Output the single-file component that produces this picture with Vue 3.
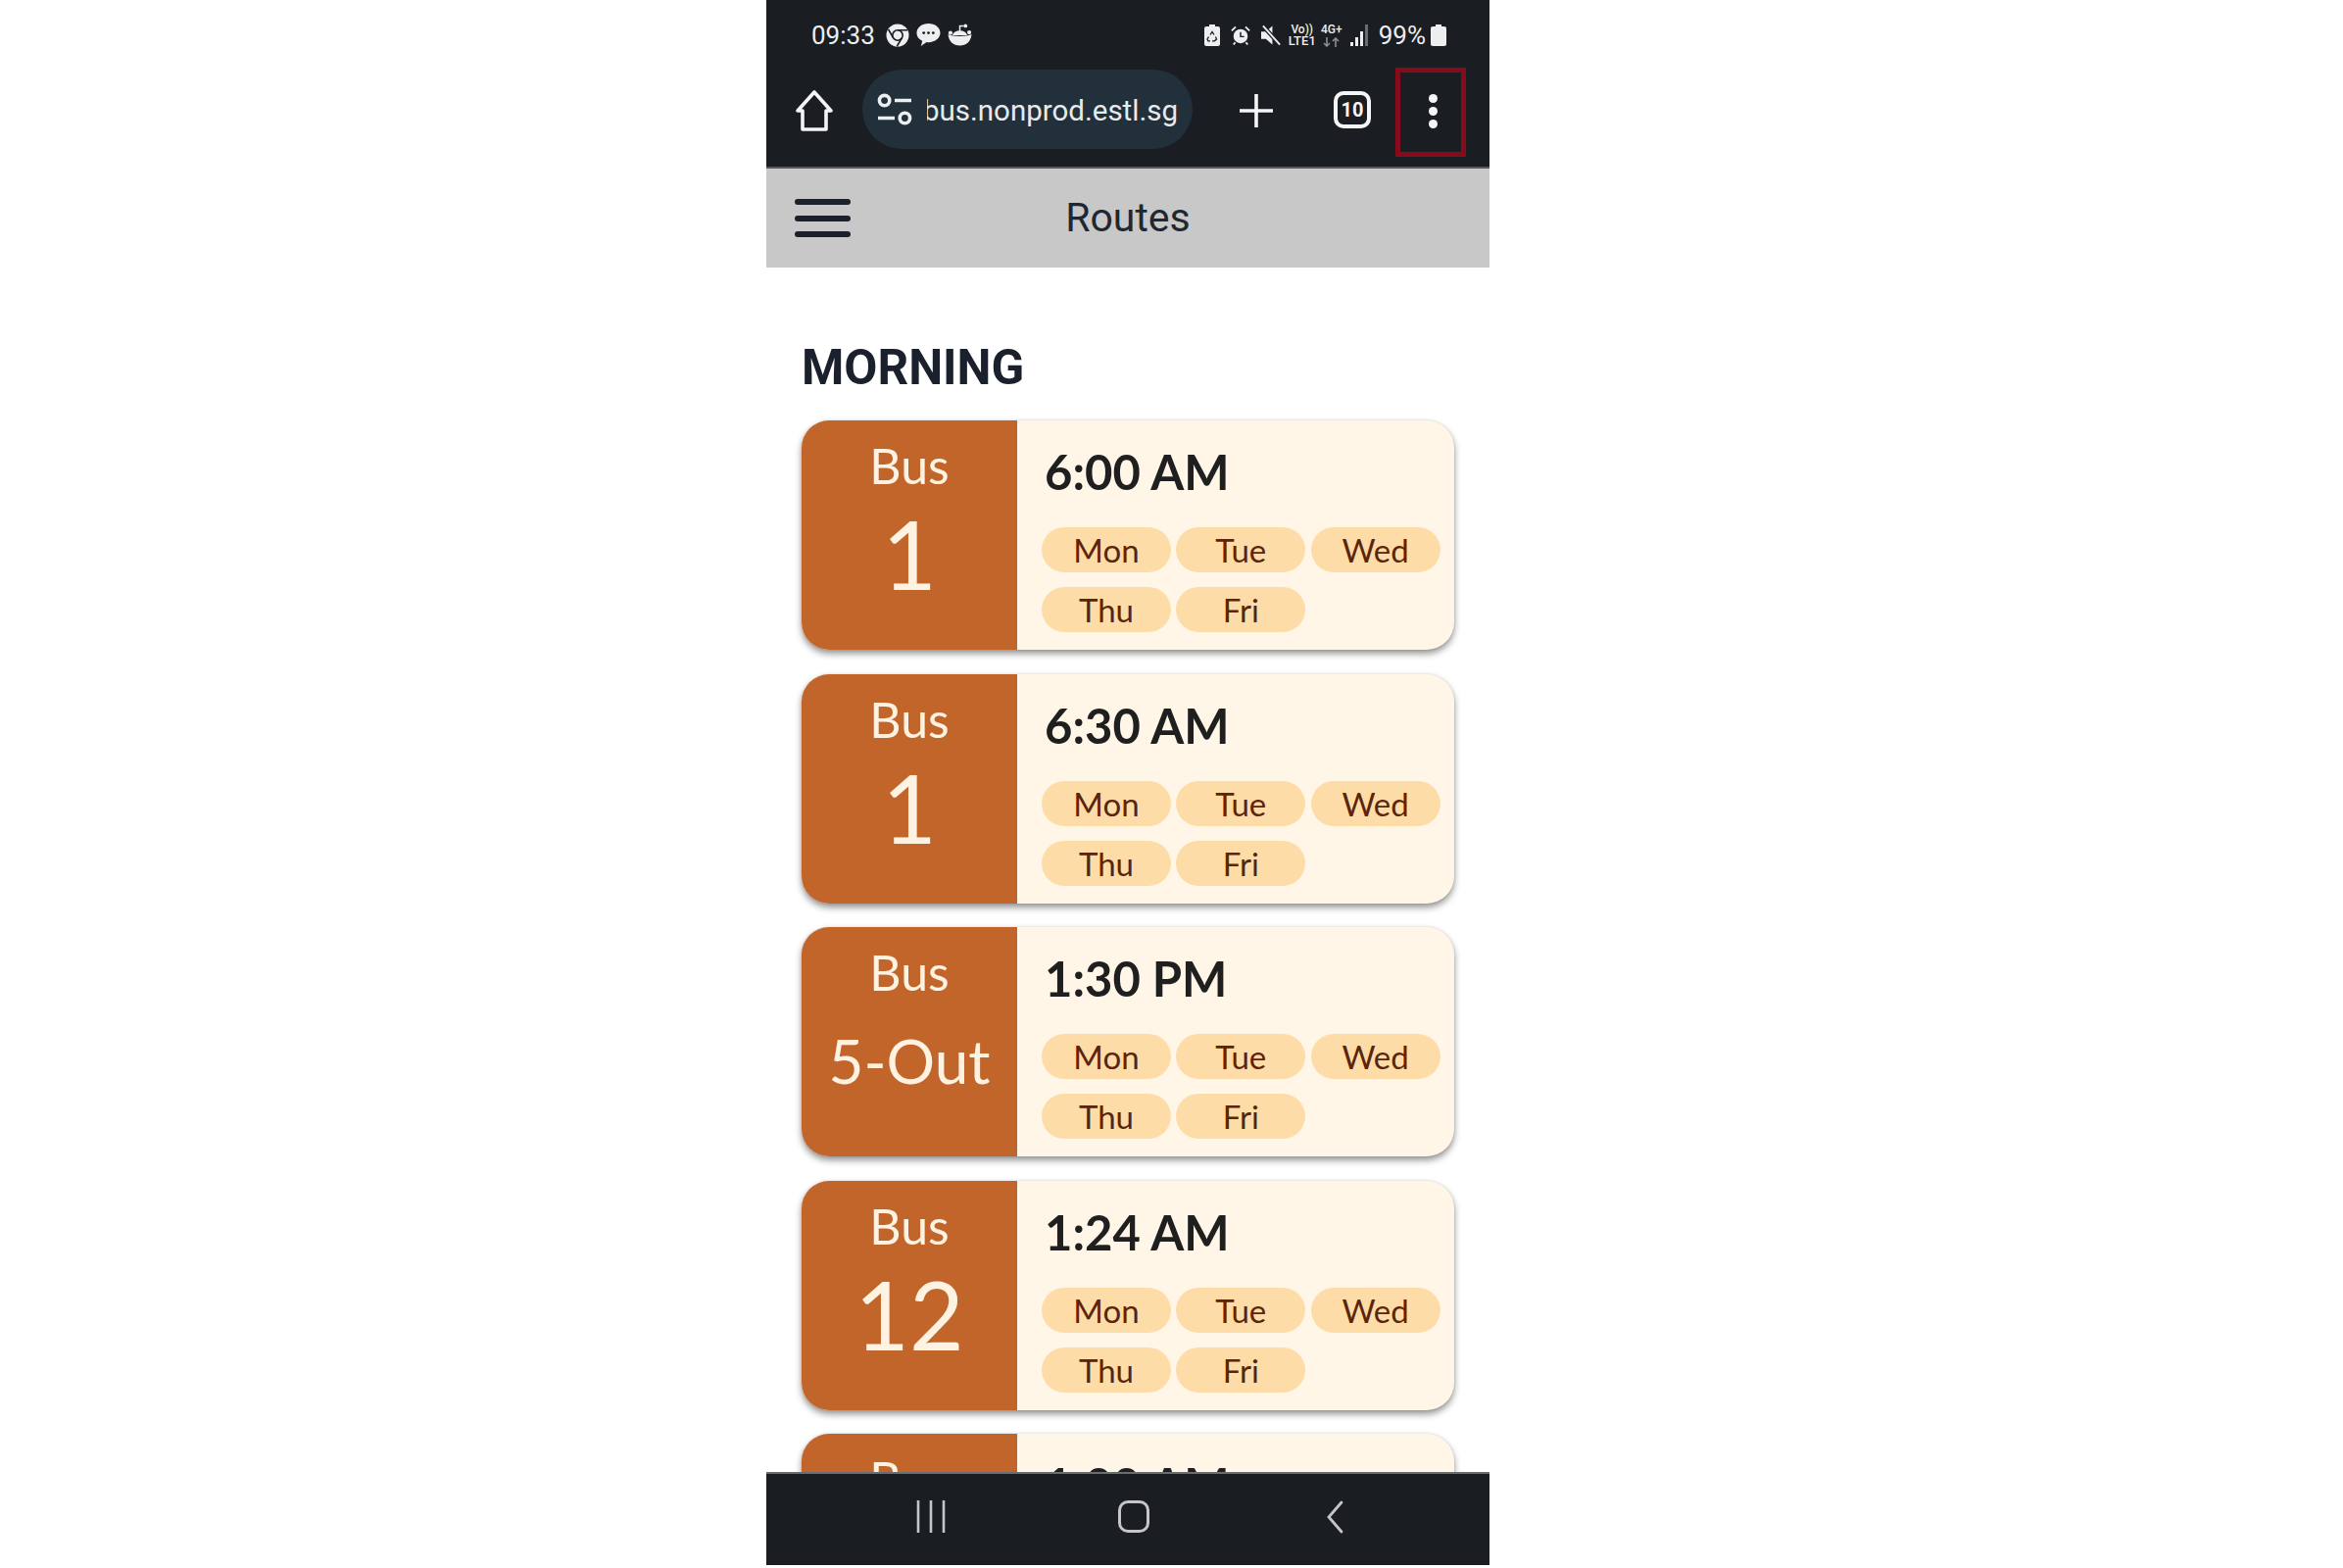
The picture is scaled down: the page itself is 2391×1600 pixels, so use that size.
<script setup>
const days = ['Mon', 'Tue', 'Wed', 'Thu', 'Fri']

const routes = [
  { bus: '1', time: '6:00 AM' },
  { bus: '1', time: '6:30 AM' },
  { bus: '5-Out', time: '1:30 PM' },
  { bus: '12', time: '1:24 AM' },
  { bus: '2', time: '1:00 AM' },
]
</script>

<template>
  <div class="stage">
    <div class="phone">
      <div class="chrome">
        <div class="status">
          <span class="clock">09:33</span>
          <!-- chrome -->
          <svg class="ico chrome-ico" viewBox="0 0 24 24">
            <circle cx="12" cy="12" r="11.5" fill="#eceef0" />
            <circle cx="12" cy="12" r="5.2" fill="#eceef0" stroke="#1a1d21" stroke-width="1.6" />
            <path d="M12 6.8H22M7.5 14.6L2.6 6M16.5 14.6L11.4 23" stroke="#1a1d21" stroke-width="1.6" fill="none" />
          </svg>
          <!-- messages -->
          <svg class="ico msg-ico" viewBox="0 0 26 26">
            <path d="M13 1C6 1 .5 5.4.5 11c0 4 2.500 7 6 8.500L5 25l6-4.200c1 .2 1.500.2 2 .2 7 0 12.500-4.400 12.500-10S20 1 13 1z" fill="#eceef0" />
            <circle cx="8" cy="11" r="1.500" fill="#1a1d21" />
            <circle cx="13" cy="11" r="1.500" fill="#1a1d21" />
            <circle cx="18" cy="11" r="1.500" fill="#1a1d21" />
          </svg>
          <!-- reddit-ish -->
          <svg class="ico pot-ico" viewBox="0 0 26 24">
            <path d="M.5 11.500C4 13 8 13.500 13 13.500S22 13 25.500 11.500C25 19 20 23.500 13 23.500S1 19 .5 11.500z" fill="#eceef0" />
            <path d="M13 10V2.500h4" stroke="#eceef0" stroke-width="1.600" fill="none" />
            <circle cx="19" cy="2.500" r="2" fill="#eceef0" />
            <circle cx="23" cy="9.500" r="2.200" fill="#eceef0" />
            <circle cx="3" cy="10" r="2.200" fill="#eceef0" />
            <path d="M5 12.500C6 9 9 7.500 13 7.500S20 9 21 12.500z" fill="#eceef0" />
          </svg>
          <div class="spacer"></div>
          <!-- power saving -->
          <svg class="ico saver-ico" viewBox="0 0 16 22">
            <path d="M5 0h6v2h3a2 2 0 0 1 2 2v16a2 2 0 0 1-2 2H2a2 2 0 0 1-2-2V4a2 2 0 0 1 2-2h3z" fill="#eceef0" />
            <path d="M6 10.500L8 7.500l2 3M11.500 12.500l1 2.500-2 1.800H8M6 16.800H4l-1-1.800 1.500-2.500" stroke="#1a1d21" stroke-width="1.300" fill="none" />
          </svg>
          <!-- alarm -->
          <svg class="ico alarm-ico" viewBox="0 0 22 22">
            <circle cx="11" cy="12" r="8" fill="#eceef0" />
            <path d="M11 7.500V12.500H15" stroke="#1a1d21" stroke-width="1.600" fill="none" />
            <path d="M1 6l4.500-4.500M21 6l-4.500-4.500M5 19l-2 2.500M17 19l2 2.500" stroke="#eceef0" stroke-width="2" />
          </svg>
          <!-- mute -->
          <svg class="ico mute-ico" viewBox="0 0 22 22">
            <path d="M0 7h5l7-6v20l-7-6H0z" fill="#eceef0" />
            <path d="M2 1l18 20" stroke="#1a1d21" stroke-width="4.500" />
            <path d="M2 1l18 20" stroke="#eceef0" stroke-width="2" />
          </svg>
          <div class="net volte"><span>Vo))</span><span>LTE1</span></div>
          <div class="net four-g">
            <span>4G+</span>
            <svg viewBox="0 0 22 10"><path d="M6 0v9M3 6l3 3 3-3M15 10V1M12 4l3-3 3 3" stroke="#8b8e91" stroke-width="1.600" fill="none" /></svg>
          </div>
          <!-- signal -->
          <svg class="ico signal-ico" viewBox="0 0 19 22">
            <rect x="0" y="18" width="3" height="4" fill="#eceef0" />
            <rect x="5" y="13" width="3" height="9" fill="#eceef0" />
            <rect x="10" y="7" width="3" height="15" fill="#eceef0" />
            <rect x="15" y="0" width="3" height="22" fill="#6a6d70" />
          </svg>
          <span class="pct">99%</span>
          <!-- battery -->
          <svg class="ico batt-ico" viewBox="0 0 16 22">
            <path d="M5 0h6v2h3a2 2 0 0 1 2 2v16a2 2 0 0 1-2 2H2a2 2 0 0 1-2-2V4a2 2 0 0 1 2-2h3z" fill="#eceef0" />
          </svg>
        </div>

        <div class="toolbar">
          <svg class="home-ico" viewBox="0 0 40 44">
            <path d="M20 3L3 22h5v19h24V22h5z" fill="none" stroke="#f4f5f6" stroke-width="3.600" stroke-linejoin="round" />
          </svg>
          <div class="pill">
            <svg class="tune-ico" viewBox="0 0 38 36">
              <circle cx="8" cy="8" r="5.500" fill="none" stroke="#eceef0" stroke-width="3.800" />
              <path d="M19 8H37M1 27H19" stroke="#eceef0" stroke-width="3.800" />
              <circle cx="30" cy="27" r="5.500" fill="none" stroke="#eceef0" stroke-width="3.800" />
            </svg>
            <div class="url"><span>bus.nonprod.estl.sg</span></div>
          </div>
          <svg class="plus-ico" viewBox="0 0 36 36">
            <path d="M18 1V35M1 18H35" stroke="#f4f5f6" stroke-width="3.600" />
          </svg>
          <div class="tabs">10</div>
          <div class="dots"><i></i><i></i><i></i></div>
          <div class="highlight"></div>
        </div>
      </div>

      <header class="app-bar">
        <div class="burger"><i></i><i></i><i></i></div>
        <div class="title">Routes</div>
      </header>

      <main class="content">
        <h2>MORNING</h2>
        <div v-for="(r, i) in routes" :key="i" class="card">
          <div class="bus">
            <div class="bus-label">Bus</div>
            <div class="bus-num" :class="{ long: r.bus.length > 2 }">{{ r.bus }}</div>
          </div>
          <div class="info">
            <div class="time">{{ r.time }}</div>
            <div class="days">
              <span v-for="d in days" :key="d" class="day">{{ d }}</span>
            </div>
          </div>
        </div>
      </main>

      <nav class="nav-bar">
        <svg class="recents" viewBox="0 0 30 33">
          <path d="M2 0V33M15 0V33M28 0V33" stroke="#c4c6c8" stroke-width="2.600" />
        </svg>
        <div class="home-btn"></div>
        <svg class="back" viewBox="0 0 20 34">
          <path d="M17 2L4 17l13 15" stroke="#c4c6c8" stroke-width="2.800" fill="none" stroke-linecap="round" />
        </svg>
      </nav>
    </div>
  </div>
</template>

<style>
html,
body {
  background: #fff;
}
</style>

<style scoped>
.stage {
  width: 2391px;
  height: 1600px;
  display: flex;
  justify-content: flex-start;
  padding-left: 782px;
  box-sizing: border-box;
  background: #fff;
  overflow: hidden;
}

.phone {
  width: 738px;
  height: 1597px;
  display: flex;
  flex-direction: column;
  overflow: hidden;
  font-family: Roboto, sans-serif;
}

.chrome {
  position: relative;
  height: 170px;
  flex: none;
  background: #1a1d21;
  border-bottom: 2px solid #55585b;
  box-sizing: content-box;
}

.status {
  height: 71px;
  display: flex;
  align-items: center;
  padding: 0 44px 0 46px;
  color: #eceef0;
  font-size: 26px;
}

.clock {
  width: 76px;
}

.spacer {
  flex: 1;
}

.ico {
  flex: none;
  display: block;
}

.chrome-ico { width: 24px; height: 24px; }
.msg-ico { width: 25px; height: 25px; margin-left: 7px; }
.pot-ico { width: 25px; height: 23px; margin-left: 7px; }
.saver-ico { width: 16px; height: 22px; }
.alarm-ico { width: 20px; height: 22px; margin-left: 11px; }
.mute-ico { width: 21px; height: 22px; margin-left: 11px; }
.signal-ico { width: 19px; height: 22px; margin-left: 8px; }
.batt-ico { width: 16px; height: 22px; margin-left: 5px; }

.net {
  display: flex;
  flex-direction: column;
  align-items: center;
  font-weight: 500;
  font-size: 12px;
  line-height: 12px;
}

.volte {
  width: 26px;
  margin-left: 8px;
}

.volte span:last-child {
  font-size: 13px;
}

.four-g {
  width: 22px;
  margin-left: 6px;
}

.four-g svg {
  width: 22px;
  height: 10px;
  margin-top: 2px;
}

.pct {
  margin-left: 10px;
}

.toolbar {
  height: 99px;
  display: flex;
  align-items: flex-start;
  padding-left: 29px;
}

.home-ico {
  width: 40px;
  height: 44px;
  flex: none;
  margin-top: 20px;
}

.pill {
  width: 337px;
  height: 81px;
  margin-left: 29px;
  flex: none;
  border-radius: 41px;
  background: #21303a;
  display: flex;
  align-items: center;
  padding-left: 14px;
  box-sizing: border-box;
  color: #e8eaec;
}

.tune-ico {
  width: 38px;
  height: 34px;
  flex: none;
}

.url {
  width: 260px;
  margin-left: 14px;
  padding-top: 3px;
  overflow: hidden;
  white-space: nowrap;
  font-size: 29.5px;
  text-indent: -4px;
}

.plus-ico {
  width: 36px;
  height: 36px;
  flex: none;
  margin: 24px 0 0 47px;
}

.tabs {
  width: 38px;
  height: 38px;
  margin: 22px 0 0 61px;
  flex: none;
  border: 4px solid #f4f5f6;
  border-radius: 10px;
  box-sizing: border-box;
  color: #f4f5f6;
  font-size: 20px;
  font-weight: 700;
  display: flex;
  align-items: center;
  justify-content: center;
}

.dots {
  display: flex;
  flex-direction: column;
  gap: 4px;
  margin: 25px 0 0 59px;
  flex: none;
}

.dots i {
  display: block;
  width: 9px;
  height: 9px;
  border-radius: 50%;
  background: #f4f5f6;
}

.highlight {
  position: absolute;
  left: 642px;
  top: 69px;
  width: 72px;
  height: 91px;
  border: 5px solid #860c1c;
  box-sizing: border-box;
}

.app-bar {
  height: 101px;
  flex: none;
  background: #c8c8c8;
  display: grid;
  grid-template-columns: 1fr auto 1fr;
  align-items: center;
  padding: 0 29px;
}

.burger {
  width: 57px;
  display: flex;
  flex-direction: column;
  gap: 10.500px;
}

.burger i {
  display: block;
  height: 6px;
  border-radius: 3px;
  background: #1a202c;
}

.title {
  color: #1f2733;
  font-size: 41px;
  padding-bottom: 2px;
}

.content {
  flex: 1;
  min-height: 0;
  overflow: hidden;
  padding: 0 36px;
  background: #fff;
}

h2 {
  margin: 0;
  padding-top: 74px;
  height: 82px;
  color: #1a202c;
  font-size: 49.5px;
  line-height: 56px;
  font-weight: 700;
  box-sizing: content-box;
}

.card {
  height: 234px;
  margin-bottom: 24.500px;
  display: flex;
  border-radius: 28px;
  overflow: hidden;
  background: #fff6e8;
  font-family: Lato, sans-serif;
  box-shadow: 0 4px 7px rgba(0, 0, 0, 0.42), 0 0 3px rgba(0, 0, 0, 0.1);
}

.bus {
  width: 220px;
  flex: none;
  background: #c2652a;
  color: #fef3e2;
  display: flex;
  flex-direction: column;
  align-items: center;
}

.bus-label {
  font-size: 50px;
  line-height: 60px;
  margin-top: 16px;
}

.bus-num {
  font-size: 96px;
  line-height: 110px;
  margin-top: 5px;
  white-space: nowrap;
}

.bus-num.long {
  font-size: 62px;
}

.info {
  flex: 1;
  padding: 22px 0 0 25px;
}

.time {
  color: #1f1f1f;
  font-size: 49px;
  line-height: 60px;
  font-weight: 700;
  margin-left: 3px;
}

.days {
  display: grid;
  grid-template-columns: repeat(3, 132px);
  gap: 15px 5.300px;
  margin-top: 27px;
}

.day {
  height: 46px;
  border-radius: 23px;
  background: #fedca8;
  color: #5c2408;
  font-size: 33px;
  line-height: 46px;
  text-align: center;
}

.nav-bar {
  height: 95px;
  flex: none;
  background: #1a1d21;
  border-top: 2px solid #6a6d70;
  box-sizing: border-box;
  position: relative;
  display: flex;
  align-items: center;
  padding-left: 153px;
  padding-bottom: 6px;
}

.recents {
  width: 30px;
  height: 33px;
  flex: none;
}

.home-btn {
  width: 32px;
  height: 33px;
  margin-left: 176px;
  flex: none;
  border: 3px solid #c4c6c8;
  border-radius: 10px;
  box-sizing: border-box;
}

.back {
  width: 20px;
  height: 34px;
  margin-left: 179px;
  flex: none;
}
</style>
